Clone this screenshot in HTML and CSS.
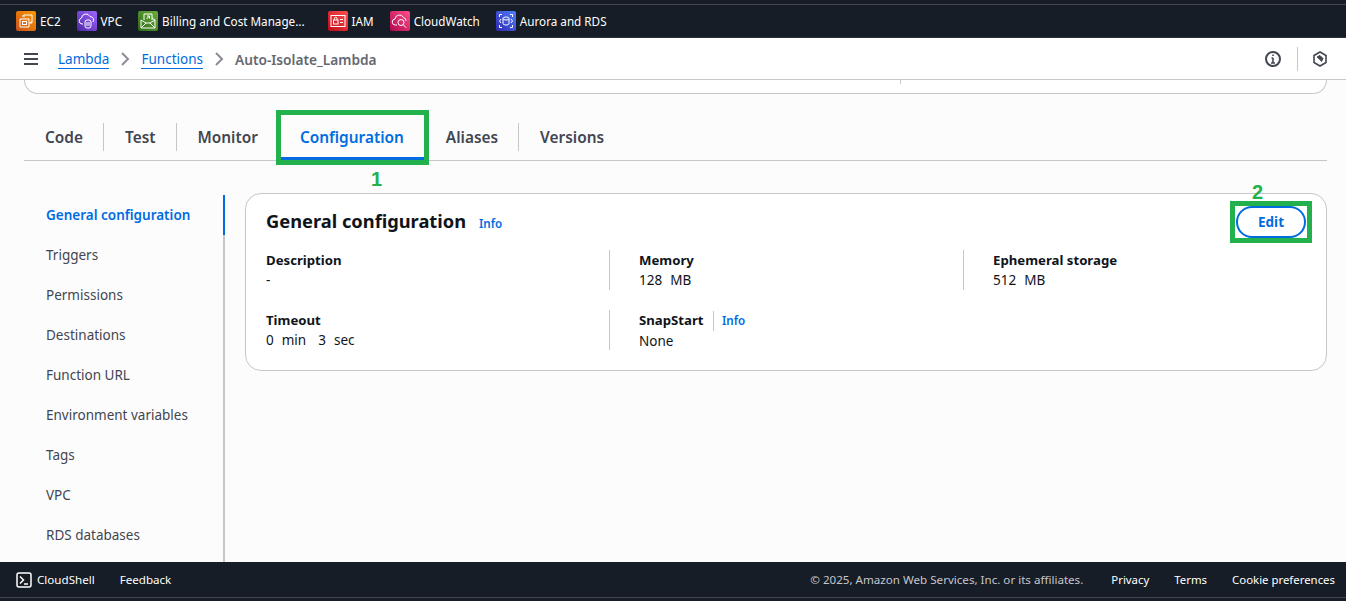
FILE: index.html
```html
<!DOCTYPE html>
<html lang="en">
<head>
    <meta charset="UTF-8">
    <title>Auto-Isolate_Lambda - Lambda</title>
    <link rel="stylesheet" href="styles.css">
</head>
<body>
    <div class="topnav">
        <a class="shortcut">
            <span class="svc svc-ec2"><svg viewBox="0 0 20 20"><path d="M8 6.500V4h8v8h-3M4 8h9v8H4zM6 5.500l2-1.500M14 12l2-2"/><rect x="6.500" y="10.500" width="4" height="3"/></svg></span>
            EC2
        </a>
        <a class="shortcut">
            <span class="svc svc-vpc"><svg viewBox="0 0 20 20"><path d="M6 13H5a3 3 0 0 1-.500-5.900A4.500 4.500 0 0 1 13 5.500a3.500 3.500 0 0 1 3 5.500"/><rect x="8" y="9" width="6" height="8" rx="2"/><path d="M10 11v4M12 11v4"/></svg></span>
            VPC
        </a>
        <a class="shortcut shortcut-billing">
            <span class="svc svc-billing"><svg viewBox="0 0 20 20"><path d="M3 9v8h14V9l-3-2M3 17l5-5h4l5 5M3 9l5 3M17 9l-5 3M6 9V3h8v6"/><path d="M8.500 8l3-3M9 5h2.500v2.500"/></svg></span>
            Billing and Cost Manage...
        </a>
        <a class="shortcut">
            <span class="svc svc-iam"><svg viewBox="0 0 20 20"><rect x="3" y="4.500" width="14" height="11"/><rect x="5.500" y="9" width="4.500" height="4"/><path d="M6.500 9V7.500a1.200 1.200 0 0 1 2.500 0V9M12 8.500h3M12 11.500h3"/></svg></span>
            IAM
        </a>
        <a class="shortcut">
            <span class="svc svc-watch"><svg viewBox="0 0 20 20"><path d="M7 14H5.500a3 3 0 0 1-.500-6A4.500 4.500 0 0 1 13.500 6.500 3.500 3.500 0 0 1 16 10"/><circle cx="11" cy="11.500" r="3"/><path d="M13.200 13.700l3 3"/></svg></span>
            CloudWatch
        </a>
        <a class="shortcut">
            <span class="svc svc-rds"><svg viewBox="0 0 20 20"><ellipse cx="10" cy="7.500" rx="3" ry="1.500"/><path d="M7 7.500v5c0 2 6 2 6 0v-5M3.500 6V3.500H6M14 3.500h2.500V6M3.500 14v2.500H6M14 16.500h2.500V14M5 8l-1.500 2L5 12M15 8l1.500 2L15 12"/></svg></span>
            Aurora and RDS
        </a>
    </div>

    <div class="crumbbar">
        <svg class="menu-icon" viewBox="0 0 14 12"><path d="M0 1h14M0 6h14M0 11h14"/></svg>
        <a class="crumb">Lambda</a>
        <svg class="chevron" viewBox="0 0 10 16"><path d="M2 2l6 6-6 6"/></svg>
        <a class="crumb">Functions</a>
        <svg class="chevron" viewBox="0 0 10 16"><path d="M2 2l6 6-6 6"/></svg>
        <span class="crumb-current">Auto-Isolate_Lambda</span>
        <span class="crumb-tools">
            <svg class="tool-icon" viewBox="0 0 16 16"><circle cx="8" cy="8" r="7"/><path d="M8 7v5M6 12h4M6.500 7H8"/><path class="dot" d="M8 3.500v1.500"/></svg>
            <span class="tool-line"></span>
            <svg class="tool-icon" viewBox="0 0 16 16"><path d="M8 1l6 3.500v7L8 15l-6-3.500v-7z"/><path class="solid" d="M5 6l3-1.500 3 3-1.500 3L8 8.500z"/></svg>
        </span>
    </div>

    <main class="content">
        <div class="prev-card"><span class="prev-line"></span></div>

        <div class="tabs">
            <a class="tab tab-line">Code</a>
            <a class="tab tab-line">Test</a>
            <a class="tab">Monitor</a>
            <a class="tab tab-active">Configuration</a>
            <a class="tab tab-line">Aliases</a>
            <a class="tab">Versions</a>
        </div>

        <div class="config">
            <nav class="sidenav">
                <a class="side-item side-active">General configuration</a>
                <a class="side-item">Triggers</a>
                <a class="side-item">Permissions</a>
                <a class="side-item">Destinations</a>
                <a class="side-item">Function URL</a>
                <a class="side-item">Environment variables</a>
                <a class="side-item">Tags</a>
                <a class="side-item">VPC</a>
                <a class="side-item">RDS databases</a>
            </nav>

            <section class="card">
                <div class="card-head">
                    <h2>General configuration</h2>
                    <a class="info info-title">Info</a>
                    <button class="edit-btn">Edit</button>
                </div>
                <div class="fields">
                    <div class="field">
                        <div class="label">Description</div>
                        <div class="value">-</div>
                    </div>
                    <div class="field">
                        <div class="label">Memory</div>
                        <div class="value">128&nbsp; MB</div>
                    </div>
                    <div class="field">
                        <div class="label">Ephemeral storage</div>
                        <div class="value">512&nbsp; MB</div>
                    </div>
                    <div class="field">
                        <div class="label">Timeout</div>
                        <div class="value">0&nbsp; min &nbsp; 3&nbsp; sec</div>
                    </div>
                    <div class="field">
                        <div class="label">SnapStart <a class="info info-label">Info</a></div>
                        <div class="value">None</div>
                    </div>
                </div>
            </section>
        </div>

        <div class="mark mark-tab"></div>
        <div class="mark mark-edit"></div>
        <div class="step step-1">1</div>
        <div class="step step-2">2</div>
    </main>

    <footer class="footer">
        <a class="foot-link foot-shell">
            <svg class="shell-icon" viewBox="0 0 16 16"><rect x="1" y="1" width="14" height="14" rx="2"/><path d="M4 4.500L7.500 8 4 11.500M8 12h4"/></svg>
            CloudShell
        </a>
        <a class="foot-link">Feedback</a>
        <span class="copyright">© 2025, Amazon Web Services, Inc. or its affiliates.</span>
        <a class="foot-link foot-small">Privacy</a>
        <a class="foot-link foot-small">Terms</a>
        <a class="foot-link foot-small">Cookie preferences</a>
    </footer>
</body>
</html>
```

FILE: styles.css
```css
* {
    box-sizing: border-box;
}
html, body {
    height: 100%;
}
body {
    display: flex;
    flex-direction: column;
    margin: 0;
    overflow: hidden;
    background: #fcfcfd;
    color: #0f141a;
    font-family: "Noto Sans", Arial, sans-serif;
    font-size: 13.5px;
}

/* top service bar */
.topnav {
    display: flex;
    align-items: center;
    gap: 16px;
    height: 38px;
    flex: none;
    padding: 5px 0 0 16px;
    background: linear-gradient(#161d26 4px, #424650 4px, #424650 5px, #161d26 5px);
    border-bottom: 1px solid #2b323c;
    color: #fff;
    font-size: 11.7px;
}
.shortcut {
    display: flex;
    align-items: center;
    gap: 4px;
    white-space: nowrap;
}
.shortcut-billing {
    margin-right: 7px;
}
.svc {
    display: block;
    width: 20px;
    height: 20px;
    border-radius: 2px;
}
.svc svg {
    display: block;
    fill: none;
    stroke: #fff;
    stroke-width: 1;
}
.svc-ec2 { background: linear-gradient(45deg, #c8511b, #ff9900); }
.svc-vpc { background: linear-gradient(45deg, #4d27a8, #a166ff); }
.svc-billing { background: linear-gradient(45deg, #2e6b15, #6cae3e); }
.svc-iam { background: linear-gradient(45deg, #bd0816, #ff5252); }
.svc-watch { background: linear-gradient(45deg, #b0084d, #ff4f8b); }
.svc-rds { background: linear-gradient(45deg, #2e27ad, #527fff); }

/* breadcrumbs */
.crumbbar {
    display: flex;
    align-items: center;
    height: 42px;
    flex: none;
    padding: 0 18px 0 24px;
    background: #fff;
    border-bottom: 1px solid #c6c6cd;
}
.menu-icon {
    width: 14px;
    height: 12px;
    margin-right: 20px;
    fill: none;
    stroke: #424650;
    stroke-width: 2;
}
.crumb {
    margin-top: 2px;
    color: #006ce0;
    border-bottom: 1px solid #006ce0;
    line-height: 17px;
}
.chevron {
    width: 10px;
    height: 16px;
    margin: 0 11px;
    fill: none;
    stroke: #8c8c94;
    stroke-width: 2;
}
.crumb-current {
    margin-top: 1px;
    color: #656871;
    font-weight: 600;
    font-size: 13.7px;
}
.crumb-tools {
    display: flex;
    align-items: center;
    margin-left: auto;
}
.tool-icon {
    width: 16px;
    height: 16px;
    fill: none;
    stroke: #424650;
    stroke-width: 2;
}
.tool-icon .solid {
    fill: #424650;
    stroke-width: 1;
}
.tool-icon path {
    stroke-width: 1.600;
}
.tool-line {
    width: 1px;
    height: 24px;
    margin: 0 14px 0 16px;
    background: #c6c6cd;
}

/* page content */
.content {
    position: relative;
    flex: 1;
    min-height: 0;
    overflow: hidden;
}
.prev-card {
    position: relative;
    height: 14px;
    margin: 0 19px 0 24px;
    background: #fff;
    border: 1px solid #c6c6cd;
    border-top: 0;
    border-radius: 0 0 16px 16px;
}
.prev-line {
    position: absolute;
    top: 0;
    left: 875px;
    width: 1px;
    height: 4px;
    background: #c6c6cd;
}
.tabs {
    display: flex;
    align-items: center;
    height: 67px;
    margin: 0 19px 0 24px;
    padding-top: 17px;
    border-bottom: 1px solid #c6c6cd;
    color: #424650;
    font-size: 15.4px;
    font-weight: 600;
}
.tab {
    position: relative;
    display: flex;
    align-items: center;
    height: 50px;
    padding: 4px 21px 0;
}
.tab-line::after {
    content: "";
    position: absolute;
    top: 12px;
    right: 0;
    width: 1px;
    height: 28px;
    background: #c6c6cd;
}
.tab-active {
    color: #006ce0;
}
.tab-active::before {
    content: "";
    position: absolute;
    right: 1px;
    bottom: 0;
    left: 2px;
    height: 4px;
    background: #006ce0;
}
.config {
    display: flex;
    align-items: flex-start;
    gap: 20px;
    margin: 34px 19px 0 0;
}
.sidenav {
    flex: none;
    width: 225px;
    height: 400px;
    border-right: 2px solid #c6c6cd;
    color: #424650;
}
.side-item {
    display: flex;
    align-items: center;
    height: 40px;
    padding-left: 46px;
}
.side-active {
    margin-right: -2px;
    border-right: 2px solid #006ce0;
    color: #006ce0;
    font-weight: 600;
}
.card {
    flex: 1;
    height: 178px;
    margin-top: -2px;
    padding: 12px 20px 0;
    background: #fff;
    border: 1px solid #c6c6cd;
    border-radius: 16px;
}
.card-head {
    display: flex;
    align-items: center;
    height: 32px;
}
.card-head h2 {
    margin: -4px 0 0;
    font-size: 18.3px;
    font-weight: 700;
}
.info {
    color: #006ce0;
    font-size: 11.6px;
    font-weight: 600;
}
.info-title {
    margin: 3px 0 0 13px;
}
.info-label {
    margin-left: 6px;
    padding-left: 8px;
    border-left: 1px solid #c6c6cd;
    line-height: 20px;
    display: inline-block;
}
.edit-btn {
    width: 70px;
    height: 32px;
    margin-left: auto;
    padding: 0;
    background: #fff;
    border: 2px solid #006ce0;
    border-radius: 16px;
    color: #006ce0;
    font-family: inherit;
    font-size: 13.5px;
    font-weight: 700;
}
.fields {
    display: grid;
    grid-template-columns: 343px 354px 1fr;
    row-gap: 20px;
    margin-top: 12px;
}
.field {
    height: 40px;
    line-height: 20px;
}
.field:nth-child(3n+2), .field:nth-child(3n) {
    padding-left: 29px;
    border-left: 1px solid #c6c6cd;
}
.label {
    font-size: 13.2px;
    font-weight: 700;
}
.value {
    word-spacing: 0.500px;
}

/* numbered annotations drawn over the screenshot */
.mark {
    position: absolute;
    border: 5px solid #22b14c;
}
.mark-tab {
    top: 30px;
    left: 276px;
    width: 153px;
    height: 55px;
}
.mark-edit {
    top: 121px;
    left: 1230px;
    width: 82px;
    height: 42px;
}
.step {
    position: absolute;
    color: #22b14c;
    font-family: "Liberation Sans", Arial, sans-serif;
    font-size: 20px;
    font-weight: 700;
    line-height: 20px;
}
.step-1 {
    top: 89px;
    left: 371px;
}
.step-2 {
    top: 102px;
    left: 1252px;
}

/* bottom bar */
.footer {
    display: flex;
    align-items: center;
    gap: 25px;
    height: 39px;
    flex: none;
    padding: 0 11px 4px 16px;
    background: linear-gradient(#161d26 35px, #424650 35px, #424650 36px, #161d26 36px);
    color: #fff;
    font-size: 11.6px;
}
.foot-link {
    white-space: nowrap;
}
.foot-small {
    font-size: 11.4px;
}
.foot-shell {
    display: flex;
    align-items: center;
    gap: 5px;
}
.shell-icon {
    width: 16px;
    height: 16px;
    fill: none;
    stroke: #fff;
    stroke-width: 1.500;
}
.copyright {
    margin-left: auto;
    margin-right: 3px;
    color: #c6c6cd;
}
```
